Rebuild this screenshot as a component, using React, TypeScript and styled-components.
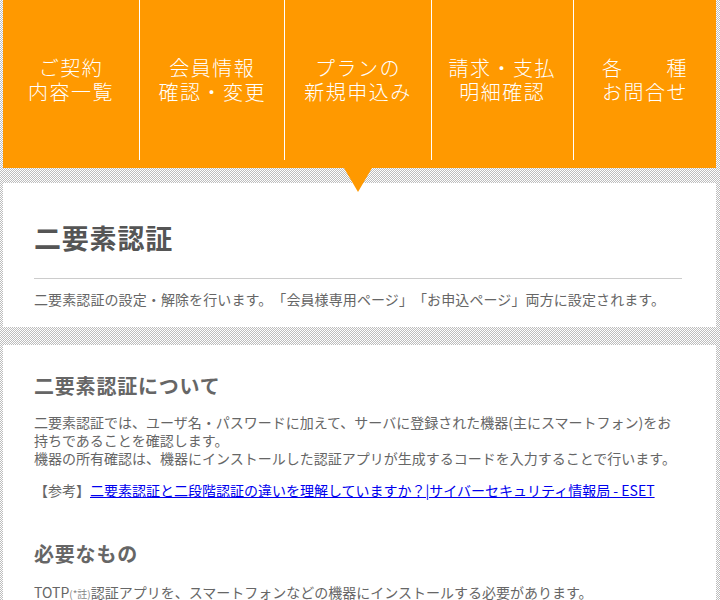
import styled, { createGlobalStyle } from "styled-components";

const GlobalStyle = createGlobalStyle`
  html, body {
    margin: 0;
    padding: 0;
  }
  body {
    font-family: "Noto Sans CJK JP", "Noto Sans", sans-serif;
    color: #666;
    text-spacing-trim: space-all;
    background-color: #fff;
    background-image: repeating-conic-gradient(#bdbdbd 0 25%, #fff 0 50%);
    background-size: 2px 2px;
  }
`

const Page = styled.div`
  padding: 0 4px 0 3px;
`

const Nav = styled.nav`
  background: #ff9900;
  padding-bottom: 8px;
`

const NavList = styled.ul`
  display: flex;
  margin: 0;
  padding: 0;
  list-style: none;
`

const NavItem = styled.li<{ $w: number; $active?: boolean }>`
  position: relative;
  flex: ${({ $w }) => `1 1 ${$w}px`};
  height: 160px;
  display: flex;
  align-items: center;
  justify-content: center;
  text-align: center;
  color: #fff;
  font-size: 20px;
  font-weight: 300;
  line-height: 24px;
  letter-spacing: 1.5px;
  cursor: pointer;
  & + & {
    border-left: 1px solid #fff;
  }
  ${({ $active }) =>
    $active &&
    `
    &::after {
      content: "";
      position: absolute;
      left: 50%;
      top: calc(100% + 8px);
      transform: translateX(-50%);
      border-left: 14px solid transparent;
      border-right: 14px solid transparent;
      border-top: 24px solid #ff9900;
      z-index: 2;
    }
  `}
`

const Card = styled.section<{ $gap: number }>`
  background: #fff;
  margin-top: ${({ $gap }) => $gap}px;
  padding: ${({ $gap }) => ($gap === 15 ? "35px 34px 18px 31px" : "27px 34px 40px 31px")};
`

const Title = styled.h1`
  margin: 0;
  font-size: 27px;
  line-height: 40px;
  font-weight: 700;
  color: #555;
  letter-spacing: 0.8px;
`

const Rule = styled.hr`
  margin: 20px 0 0;
  border: 0;
  border-top: 1px solid #ccc;
`

const Lead = styled.p`
  margin: 10px 0 0;
  font-size: 14px;
  line-height: 20px;
  letter-spacing: 0.1px;
`

const Heading = styled.h2<{ $gap?: number }>`
  margin: ${({ $gap }) => $gap ?? 0}px 0 0;
  font-size: 20px;
  line-height: 28px;
  font-weight: 700;
  color: #666;
  letter-spacing: 0.8px;
`

const Text = styled.p<{ $gap: number }>`
  margin: ${({ $gap }) => $gap}px 0 0;
  font-size: 14px;
  line-height: 18px;
  white-space: nowrap;
`

const Ref = styled.a`
  color: #0000ee;
  text-decoration: underline;
`

const Note = styled.span`
  font-size: 10px;
  color: #888;
`

const menu: [string, string, number][] = [
  ["ご契約", "内容一覧", 137],
  ["会員情報", "確認・変更", 145],
  ["プランの", "新規申込み", 146],
  ["請求・支払", "明細確認", 142],
  ["各\u3000\u3000種", "お問合せ", 143],
]

export default function App() {
  return (
    <Page>
      <GlobalStyle />
      <Nav>
        <NavList>
          {menu.map(([a, b, w], i) => (
            <NavItem key={a} $w={w} $active={i === 2}>
              {a}
              <br />
              {b}
            </NavItem>
          ))}
        </NavList>
      </Nav>

      <Card $gap={15}>
        <Title>二要素認証</Title>
        <Rule />
        <Lead>
          二要素認証の設定・解除を行います。「会員様専用ページ」「お申込ページ」両方に設定されます。
        </Lead>
      </Card>

      <Card $gap={18}>
        <Heading>二要素認証について</Heading>
        <Text $gap={13}>
          二要素認証では、ユーザ名・パスワードに加えて、サーバに登録された機器(主にスマートフォン)をお
          <br />
          持ちであることを確認します。
          <br />
          機器の所有確認は、機器にインストールした認証アプリが生成するコードを入力することで行います。
        </Text>
        <Text $gap={14}>
          【参考】
          <Ref href="#">
            二要素認証と二段階認証の違いを理解していますか？|サイバーセキュリティ情報局 - ESET
          </Ref>
        </Text>
        <Heading $gap={41}>必要なもの</Heading>
        <Text $gap={15}>
          TOTP<Note>(*註)</Note>認証アプリを、スマートフォンなどの機器にインストールする必要があります。
        </Text>
      </Card>
    </Page>
  )
}
